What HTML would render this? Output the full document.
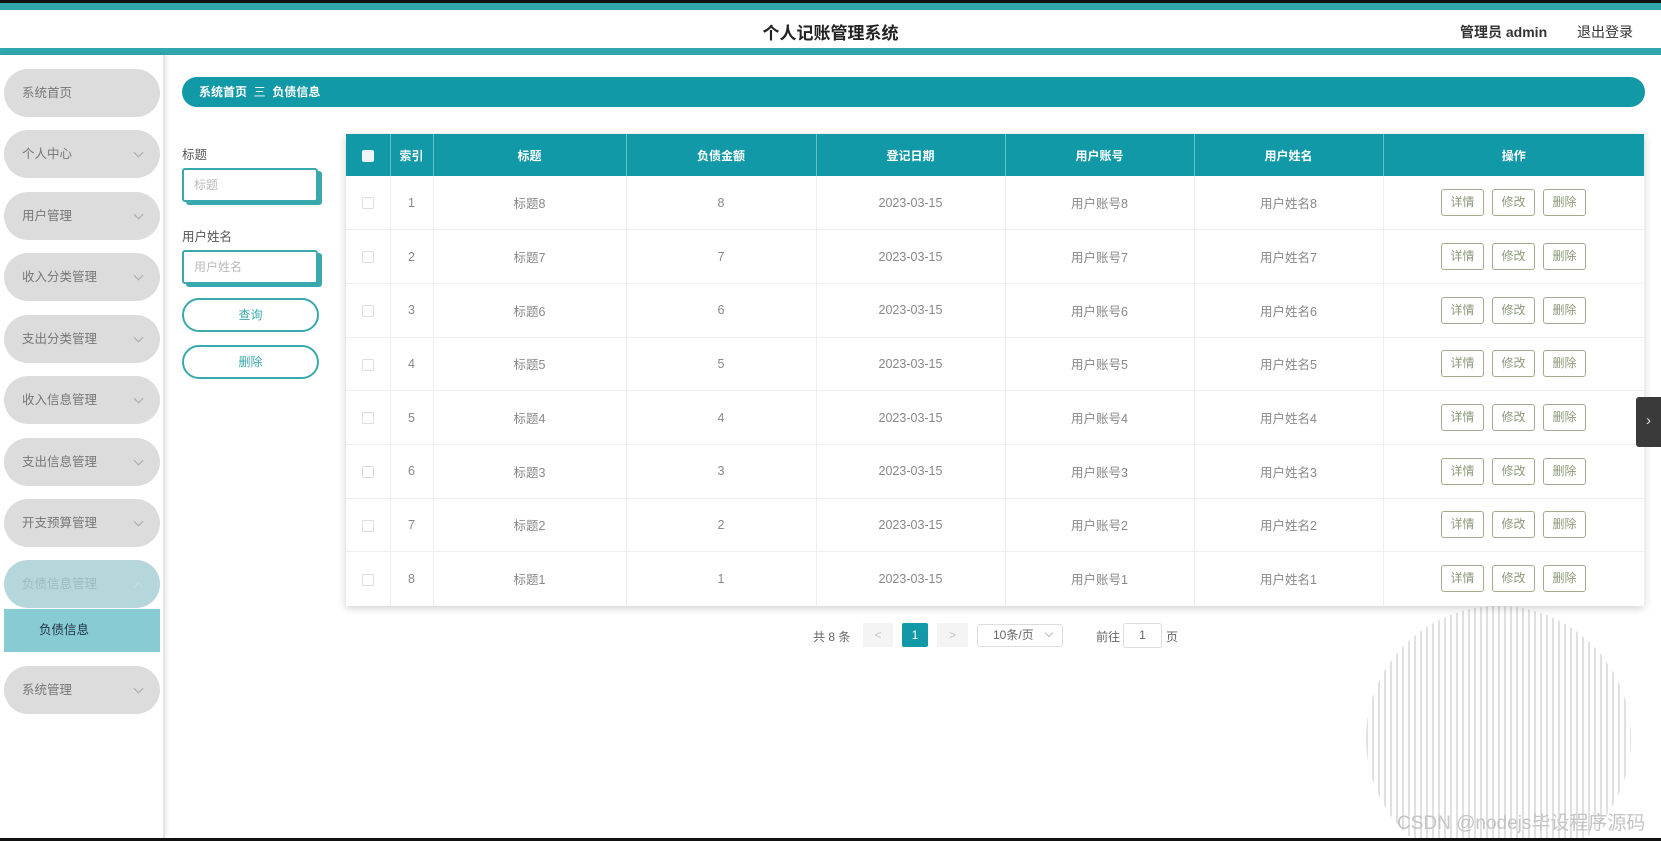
<!DOCTYPE html>
<html><head><meta charset="utf-8">
<style>
*{margin:0;padding:0;box-sizing:border-box}
html,body{width:1661px;height:841px;overflow:hidden}
body{background:#fff;font-family:"Liberation Sans","Noto Sans CJK SC",sans-serif;position:relative}
.abs{position:absolute}
.top{left:0;top:0;width:1661px;height:3px;background:#111}
.t1{left:0;top:3px;width:1661px;height:7px;background:#2fa7ad}
.t2{left:0;top:48px;width:1661px;height:7px;background:#2fa7ad}
.title{left:0;width:1661px;top:19px;text-align:center;font-size:17px;font-weight:bold;color:#222}
.side{left:0;top:55px;width:165px;height:783px;border-right:2px solid #e4e4e4;box-shadow:2px 0 4px rgba(0,0,0,.08)}
.mi{left:4px;width:156px;height:48px;border-radius:24px;background:#dcdcdc;color:#777;font-size:12.5px;line-height:48px;padding-left:18px}
.mi .cv{position:absolute;right:18px;top:19px;width:7px;height:7px;border-right:1px solid #aaa;border-bottom:1px solid #aaa;transform:rotate(45deg)}
.bc{left:182px;top:77px;width:1463px;height:30px;border-radius:15px;background:#1199a8;color:#fff;font-size:12px;font-weight:bold;line-height:30px;padding-left:17px}
.lbl{font-size:12.5px;color:#555}
.inp{width:136px;height:34px;border:2px solid #3aa9ad;border-radius:3px;box-shadow:4px 3px 0 #3aa9ad;font-size:12px;color:#bbb;line-height:30px;padding-left:10px;background:#fff}
.btn{width:137px;height:34px;border:2px solid #3aa9ad;border-radius:17px;text-align:center;line-height:30px;font-size:12px;color:#3aa9ad}
.tbl{left:346px;top:134px;width:1298px;height:472px;box-shadow:0 2px 8px rgba(0,0,0,.2);background:#fff}
table{border-collapse:collapse;width:1298px;table-layout:fixed}
th{background:#1199a8;color:#fff;font-size:12px;height:42px;border-right:1px solid #5fc0c8;font-weight:bold}
td{height:53.7px;text-align:center;vertical-align:middle;font-size:12.5px;color:#888;border-right:1px solid #eee;border-bottom:1px solid #eee}
.cb{display:inline-block;width:12px;height:12px;border:1px solid #ddd;border-radius:2px;background:#fff;vertical-align:middle}
.hcb{display:inline-block;width:12px;height:12px;background:#eef6fb;border-radius:2px;vertical-align:middle}
.ab{display:inline-block;width:43px;height:27px;border:1px solid #a8a88e;border-radius:3px;line-height:25px;font-size:12px;color:#8d9a78;margin:0 4px;vertical-align:middle}
.pg{font-size:12px;color:#666}
.cwrap{left:1366px;top:606px;width:265px;height:232px;overflow:hidden}
.circle{position:absolute;left:0;top:0;width:265px;height:265px;border-radius:50%;background:repeating-linear-gradient(90deg,#e0e0e0 0 2px,transparent 2px 6px)}
</style></head><body>
<div class="abs top"></div><div class="abs t1"></div><div class="abs t2"></div>
<div class="abs title">个人记账管理系统</div>
<div class="abs" style="left:1460px;top:22px;font-size:14px;font-weight:bold;color:#333">管理员 admin</div>
<div class="abs" style="left:1577px;top:22px;font-size:14px;color:#333">退出登录</div>
<div class="abs side"></div>
<div class="abs mi" style="top:69px">系统首页</div>
<div class="abs mi" style="top:130px">个人中心<span class="cv"></span></div>
<div class="abs mi" style="top:192px">用户管理<span class="cv"></span></div>
<div class="abs mi" style="top:253px">收入分类管理<span class="cv"></span></div>
<div class="abs mi" style="top:315px">支出分类管理<span class="cv"></span></div>
<div class="abs mi" style="top:376px">收入信息管理<span class="cv"></span></div>
<div class="abs mi" style="top:438px">支出信息管理<span class="cv"></span></div>
<div class="abs mi" style="top:499px">开支预算管理<span class="cv"></span></div>
<div class="abs mi" style="top:560px;background:#b5d6da;color:#9bbcc0">负债信息管理<span class="cv" style="transform:rotate(225deg);top:24px;border-color:#c5dde0"></span></div>
<div class="abs" style="left:4px;top:609px;width:156px;height:43px;background:#87ccd3;color:#234;font-size:12.5px;line-height:43px;padding-left:35px">负债信息</div>
<div class="abs mi" style="top:666px">系统管理<span class="cv"></span></div>
<div class="abs bc">系统首页 &nbsp;<span style="font-weight:normal">三</span>&nbsp; 负债信息</div>
<div class="abs lbl" style="left:182px;top:144px">标题</div>
<div class="abs inp" style="left:182px;top:168px">标题</div>
<div class="abs lbl" style="left:182px;top:226px">用户姓名</div>
<div class="abs inp" style="left:182px;top:250px">用户姓名</div>
<div class="abs btn" style="left:182px;top:298px">查询</div>
<div class="abs btn" style="left:182px;top:345px">删除</div>
<div class="abs cwrap"><div class="circle"></div></div>
<div class="abs tbl"><table>
<colgroup><col style="width:44px"><col style="width:43px"><col style="width:193px"><col style="width:190px"><col style="width:189px"><col style="width:189px"><col style="width:189px"><col style="width:261px"></colgroup>
<tr><th><span class="hcb"></span></th><th>索引</th><th>标题</th><th>负债金额</th><th>登记日期</th><th>用户账号</th><th>用户姓名</th><th style="border-right:0">操作</th></tr>
<tr><td><span class="cb"></span></td><td>1</td><td>标题8</td><td>8</td><td>2023-03-15</td><td>用户账号8</td><td>用户姓名8</td><td><span class="ab">详情</span><span class="ab">修改</span><span class="ab">删除</span></td></tr>
<tr><td><span class="cb"></span></td><td>2</td><td>标题7</td><td>7</td><td>2023-03-15</td><td>用户账号7</td><td>用户姓名7</td><td><span class="ab">详情</span><span class="ab">修改</span><span class="ab">删除</span></td></tr>
<tr><td><span class="cb"></span></td><td>3</td><td>标题6</td><td>6</td><td>2023-03-15</td><td>用户账号6</td><td>用户姓名6</td><td><span class="ab">详情</span><span class="ab">修改</span><span class="ab">删除</span></td></tr>
<tr><td><span class="cb"></span></td><td>4</td><td>标题5</td><td>5</td><td>2023-03-15</td><td>用户账号5</td><td>用户姓名5</td><td><span class="ab">详情</span><span class="ab">修改</span><span class="ab">删除</span></td></tr>
<tr><td><span class="cb"></span></td><td>5</td><td>标题4</td><td>4</td><td>2023-03-15</td><td>用户账号4</td><td>用户姓名4</td><td><span class="ab">详情</span><span class="ab">修改</span><span class="ab">删除</span></td></tr>
<tr><td><span class="cb"></span></td><td>6</td><td>标题3</td><td>3</td><td>2023-03-15</td><td>用户账号3</td><td>用户姓名3</td><td><span class="ab">详情</span><span class="ab">修改</span><span class="ab">删除</span></td></tr>
<tr><td><span class="cb"></span></td><td>7</td><td>标题2</td><td>2</td><td>2023-03-15</td><td>用户账号2</td><td>用户姓名2</td><td><span class="ab">详情</span><span class="ab">修改</span><span class="ab">删除</span></td></tr>
<tr><td style="border-bottom:0"><span class="cb"></span></td><td style="border-bottom:0">8</td><td style="border-bottom:0">标题1</td><td style="border-bottom:0">1</td><td style="border-bottom:0">2023-03-15</td><td style="border-bottom:0">用户账号1</td><td style="border-bottom:0">用户姓名1</td><td style="border-bottom:0"><span class="ab">详情</span><span class="ab">修改</span><span class="ab">删除</span></td></tr>
</table></div>
<div class="abs pg" style="left:813px;top:628px">共 8 条</div>
<div class="abs" style="left:863px;top:623px;width:30px;height:24px;background:#f4f4f5;color:#c0c4cc;font-size:12px;text-align:center;line-height:24px">&lt;</div>
<div class="abs" style="left:902px;top:623px;width:26px;height:24px;background:#1199a8;color:#fff;font-size:12px;text-align:center;line-height:24px;border-radius:2px">1</div>
<div class="abs" style="left:937px;top:623px;width:31px;height:24px;background:#f4f4f5;color:#c0c4cc;font-size:12px;text-align:center;line-height:24px">&gt;</div>
<div class="abs pg" style="left:977px;top:624px;width:86px;height:23px;border:1px solid #ddd;border-radius:3px;line-height:21px;padding-left:15px">10条/页<span style="position:absolute;right:10px;top:5px;width:6px;height:6px;border-right:1px solid #bbb;border-bottom:1px solid #bbb;transform:rotate(45deg)"></span></div>
<div class="abs pg" style="left:1096px;top:628px">前往</div>
<div class="abs pg" style="left:1123px;top:623px;width:39px;height:25px;border:1px solid #ddd;border-radius:3px;text-align:center;line-height:23px">1</div>
<div class="abs pg" style="left:1166px;top:628px">页</div>
<div class="abs" style="left:1636px;top:397px;width:25px;height:50px;background:#3a3a3a;border-radius:3px 0 0 3px;color:#ddd;font-size:15px;text-align:center;line-height:48px">›</div>
<div class="abs" style="left:1397px;top:808px;font-size:19px;color:#c4c4c4">CSDN @nodejs毕设程序源码</div>
<div class="abs" style="left:0;top:838px;width:1661px;height:3px;background:#111"></div>
</body></html>
